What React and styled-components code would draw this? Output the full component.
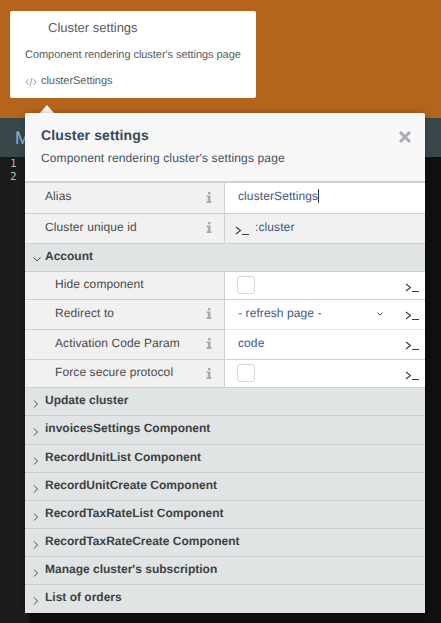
import React from "react";
import styled, { createGlobalStyle } from "styled-components";

const Global = createGlobalStyle`
  html, body { margin: 0; padding: 0; width: 441px; height: 623px; overflow: hidden; background: #0f0f0f; }
  * { box-sizing: border-box; }
  body { font-family: "Liberation Sans", Arial, sans-serif; text-rendering: geometricPrecision; }
`;

const Page = styled.div`
  position: relative;
  width: 441px;
  height: 623px;
  display: flex;
  flex-direction: column;
  overflow: hidden;
`;
const TopBar = styled.div`
  height: 118px;
  background: #b5651b;
  flex: none;
`;
const MenuBar = styled.div`
  height: 39px;
  flex: none;
  background: #3a474a;
  color: #8fb6c9;
  font-size: 18px;
  line-height: 20px;
  padding: 10px 0 0 15px;
`;
const Editor = styled.div`
  flex: 1;
  display: flex;
  background: #0f0f0f;
`;
const Gutter = styled.div`
  width: 29px;
  background: #1b1b1b;
  color: #b4b4b4;
  font: 11px/13px "DejaVu Sans Mono", monospace;
  padding: 0 0 0 10px;
`;

const Card = styled.div`
  position: absolute;
  left: 10px;
  top: 11px;
  width: 246px;
  height: 87px;
  background: #fff;
  border-radius: 2px;
  color: #555b5e;
`;
const CardTitle = styled.div`
  font-size: 13px;
  line-height: 16px;
  padding: 9px 0 0 38px;
`;
const CardDesc = styled.div`
  font-size: 11px;
  line-height: 13px;
  letter-spacing: -0.05px;
  padding: 13px 0 0 15px;
`;
const CardName = styled.div`
  display: flex;
  align-items: center;
  gap: 4px;
  font-size: 11px;
  line-height: 13px;
  letter-spacing: -0.05px;
  padding: 13px 0 0 15px;
`;
const Arrow = styled.div`
  position: absolute;
  left: 40px;
  top: 105px;
  width: 0;
  height: 0;
  border-left: 7px solid transparent;
  border-right: 7px solid transparent;
  border-bottom: 8px solid #f8f8f8;
`;

const Popover = styled.div`
  position: absolute;
  left: 25px;
  top: 113px;
  width: 400px;
  height: 500px;
  background: #e0e4e5;
  border-radius: 2px 2px 0 0;
  overflow: hidden;
  display: flex;
  flex-direction: column;
  box-shadow: 0 0 6px rgba(0,0,0,.25);
`;
const Header = styled.div`
  position: relative;
  height: 70px;
  flex: none;
  background: #f8f8f8;
  border-bottom: 2px solid #d0d2d2;
  padding: 14px 16px 0;
  color: #34495e;
`;
const Title = styled.div`
  font-size: 14px;
  line-height: 16px;
  font-weight: 700;
  letter-spacing: 0.13px;
`;
const Desc = styled.div`
  font-size: 12px;
  line-height: 14px;
  letter-spacing: 0.14px;
  margin-top: 8px;
  color: #3f5166;
`;
const Close = styled.svg`
  position: absolute;
  right: 13px;
  top: 17px;
`;

const Row = styled.div`
  display: flex;
  flex: none;
  height: ${(p) => p.$h}px;
  border-bottom: 1px solid ${(p) => (p.$flat ? "transparent" : "#cfd1d1")};
`;
const LabelCell = styled.div`
  position: relative;
  width: 200px;
  flex: none;
  background: #f1f1f1;
  border-right: 1px solid #cfd1d1;
  padding: ${(p) => p.$pt ?? 6}px 12px 0 ${(p) => (p.$nested ? 30 : 20)}px;
  font-size: 12px;
  line-height: 15px;
  letter-spacing: 0.1px;
  color: #4a4a4a;
  border-bottom: ${(p) => (p.$flatLabel ? "1px solid #cfd1d1" : "none")};
  margin-bottom: ${(p) => (p.$flatLabel ? "-1px" : "0")};
`;
const InfoIcon = styled.svg`
  position: absolute;
  left: 181px;
  top: ${(p) => p.$top ?? 8}px;
`;
const ValueCell = styled.div`
  flex: 1;
  min-width: 0;
  position: relative;
  display: flex;
  padding: ${(p) => p.$pt ?? 6}px 0 0 13px;
  background: ${(p) => (p.$grey ? "#f1f1f1" : "#fff")};
  font-size: 12px;
  line-height: 15px;
  letter-spacing: 0.1px;
  color: #3e5688;
`;
const Caret = styled.span`
  display: inline-block;
  width: 1px;
  height: 14px;
  background: #2c3e60;
  vertical-align: top;
`;
const PromptIcon = styled.svg`
  position: absolute;
  right: 6px;
  top: 11px;
`;
const PromptLeftIcon = styled.svg`
  flex: none;
  margin: 6px 6px 0 -3px;
`;
const Check = styled.span`
  width: 18px;
  height: 18px;
  margin: -1px 0 0 -1px;
  border: 1px solid #d5d8d9;
  border-radius: 3px;
  background: #fff;
`;
const SelectChevron = styled.svg`
  position: absolute;
  left: 152px;
  top: 12px;
`;

const SectionRow = styled.div`
  position: relative;
  flex: none;
  height: ${(p) => p.$h ?? 28}px;
  border-bottom: 1px solid ${(p) => (p.$last ? "transparent" : "#c9cccc")};
  padding: 5px 0 0 20px;
  font-size: 12px;
  line-height: 15px;
  font-weight: 700;
  color: #3d4142;
`;
const Chevron = styled.svg`
  position: absolute;
  left: ${(p) => p.$left}px;
  top: ${(p) => p.$top}px;
`;

const Rows = styled.div`
  display: flex;
  flex-direction: column;
`;

const ChevronRight = () => (
  <Chevron $left={8} $top={12} width="6" height="8" viewBox="0 0 6 8">
    <path d="M1 0.5 L4.5 4 L1 7.5" fill="none" stroke="#4a4e50" strokeWidth="1" />
  </Chevron>
);
const ChevronDown = () => (
  <Chevron $left={8} $top={13} width="8" height="5" viewBox="0 0 8 5">
    <path d="M0.5 0.5 L4 4 L7.5 0.5" fill="none" stroke="#4a4e50" strokeWidth="1" />
  </Chevron>
);
const Info = ({ top }) => (
  <InfoIcon $top={top} width="6" height="11" viewBox="0 0 6 11">
    <path d="M2 0 H4.5 V2.2 H2 Z M0.5 3.6 H4.5 V9.2 H5.5 V11 H0.5 V9.2 H1.8 V5 H0.5 Z" fill="#a8aaaa" />
  </InfoIcon>
);
const promptPaths = (
  <path d="M1 1 L5.5 4.5 L1 8 M7 8.5 H14" fill="none" stroke="#2c3e50" strokeWidth="1.1" />
);
const Prompt = () => (
  <PromptIcon width="14" height="10" viewBox="0 0 14 10">
    {promptPaths}
  </PromptIcon>
);
const PromptLeft = () => (
  <PromptLeftIcon width="14" height="10" viewBox="0 0 14 10">
    {promptPaths}
  </PromptLeftIcon>
);

const sections = [
  ["Update cluster", 28],
  ["invoicesSettings Component", 29],
  ["RecordUnitList Component", 28],
  ["RecordUnitCreate Component", 28],
  ["RecordTaxRateList Component", 28],
  ["RecordTaxRateCreate Component", 28],
  ["Manage cluster's subscription", 28],
  ["List of orders", 29],
];

export default function App() {
  return (
    <Page>
      <Global />
      <TopBar />
      <MenuBar>M</MenuBar>
      <Editor>
        <Gutter>
          1
          <br />2
        </Gutter>
      </Editor>

      <Card>
        <CardTitle>Cluster settings</CardTitle>
        <CardDesc>Component rendering cluster's settings page</CardDesc>
        <CardName>
          <svg width="12" height="10" viewBox="0 0 12 10">
            <path d="M3.5 2 L1 5 L3.5 8 M8.5 2 L11 5 L8.5 8 M7 1 L5 9" fill="none" stroke="#999" strokeWidth="0.9" />
          </svg>
          clusterSettings
        </CardName>
      </Card>
      <Arrow />

      <Popover>
        <Header>
          <Title>Cluster settings</Title>
          <Desc>Component rendering cluster's settings page</Desc>
          <Close width="14" height="14" viewBox="0 0 14 14">
            <path d="M2 2 L12 12 M12 2 L2 12" stroke="#a6adb3" strokeWidth="3" fill="none" />
          </Close>
        </Header>
        <Rows>
          <Row $h={31}>
            <LabelCell>
              Alias
              <Info top={9} />
            </LabelCell>
            <ValueCell>
              clusterSettings
              <Caret />
            </ValueCell>
          </Row>
          <Row $h={30}>
            <LabelCell>
              Cluster unique id
              <Info />
            </LabelCell>
            <ValueCell $grey>
              <PromptLeft />:cluster
            </ValueCell>
          </Row>
          <SectionRow $h={28}>
            <ChevronDown />
            Account
          </SectionRow>
          <Row $h={28}>
            <LabelCell $nested $pt={5}>Hide component</LabelCell>
            <ValueCell $pt={5}>
              <Check />
              <Prompt />
            </ValueCell>
          </Row>
          <Row $h={30} $flat>
            <LabelCell $nested $flatLabel>
              Redirect to
              <Info />
            </LabelCell>
            <ValueCell>
              - refresh page -
              <SelectChevron width="6" height="4" viewBox="0 0 6 4">
                <path d="M0.5 0.5 L3 3 L5.5 0.5" fill="none" stroke="#4e6593" strokeWidth="1" />
              </SelectChevron>
              <Prompt />
            </ValueCell>
          </Row>
          <Row $h={30}>
            <LabelCell $nested>
              Activation Code Param
              <Info />
            </LabelCell>
            <ValueCell>
              code
              <Prompt />
            </ValueCell>
          </Row>
          <Row $h={28}>
            <LabelCell $nested $pt={5}>
              Force secure protocol
              <Info />
            </LabelCell>
            <ValueCell $pt={5}>
              <Check />
              <Prompt />
            </ValueCell>
          </Row>
          {sections.map(([name, h], i) => (
            <SectionRow key={name} $h={h} $last={i === sections.length - 1}>
              <ChevronRight />
              {name}
            </SectionRow>
          ))}
        </Rows>
      </Popover>
    </Page>
  );
}
